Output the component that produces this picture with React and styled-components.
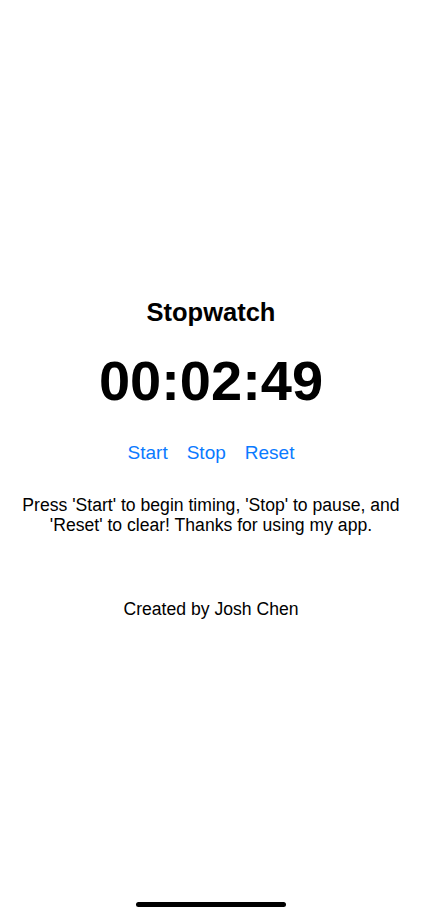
import React from "react";
import styled, { createGlobalStyle } from "styled-components";

const GlobalStyle = createGlobalStyle`
    html, body {
        margin: 0;
        padding: 0;
        background: #ffffff;
    }
    body {
        font-family: "Liberation Sans", Arial, sans-serif;
        color: #000000;
    }
`

const Screen = styled.div`
    width: 422px;
    height: 916px;
    display: flex;
    flex-direction: column;
    align-items: center;
    box-sizing: border-box;
    padding-top: 296px;
    overflow: hidden;
`

const Title = styled.h1`
    margin: 0;
    font-size: 25.5px;
    font-weight: 700;
    line-height: 32px;
`

const Timer = styled.div`
    margin-top: 23px;
    font-size: 56px;
    font-weight: 700;
    line-height: 60px;
`

const ButtonRow = styled.div`
    display: flex;
    gap: 19px;
    margin-top: 30px;
`

const TextButton = styled.button`
    background: none;
    border: none;
    padding: 0;
    font-family: inherit;
    font-size: 19px;
    line-height: 24px;
    color: #0a7aff;
    cursor: pointer;
`

const Info = styled.p`
    margin: 30px 0 0;
    width: 410px;
    text-align: center;
    font-size: 17.6px;
    line-height: 20px;
`

const Credit = styled.p`
    margin: 64px 0 0;
    font-size: 17.6px;
    line-height: 20px;
`

const Spacer = styled.div`
    flex: 1;
`

const HomeIndicator = styled.div`
    width: 150px;
    height: 5px;
    border-radius: 3px;
    background: #000000;
    margin-bottom: 9px;
`

export default function App() {
    return (
        <>
            <GlobalStyle />
            <Screen>
                <Title>Stopwatch</Title>
                <Timer>00:02:49</Timer>
                <ButtonRow>
                    <TextButton>Start</TextButton>
                    <TextButton>Stop</TextButton>
                    <TextButton>Reset</TextButton>
                </ButtonRow>
                <Info>
                    Press 'Start' to begin timing, 'Stop' to pause, and
                    <br />
                    'Reset' to clear! Thanks for using my app.
                </Info>
                <Credit>Created by Josh Chen</Credit>
                <Spacer />
                <HomeIndicator />
            </Screen>
        </>
    )
}
